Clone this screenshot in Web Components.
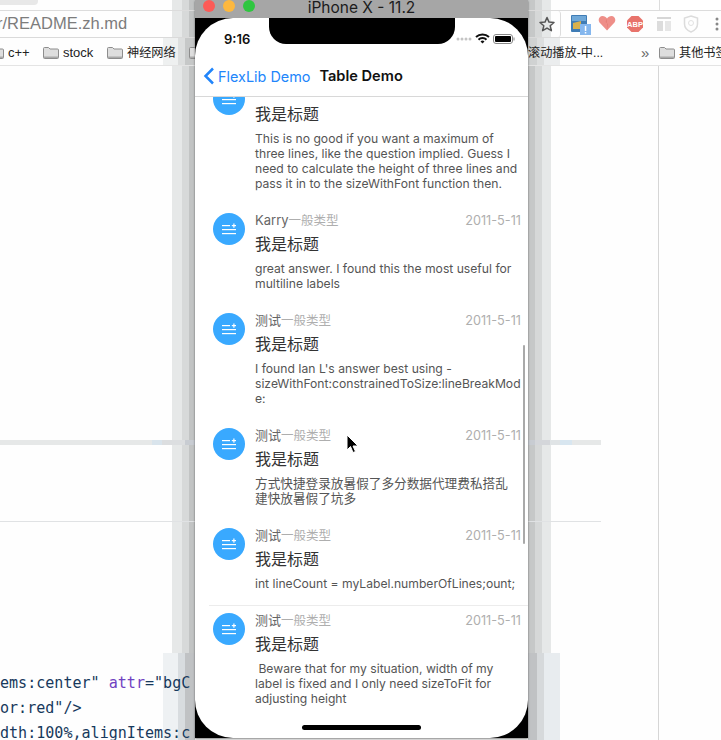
<!DOCTYPE html>
<html>
<head>
<meta charset="utf-8">
<title>Table Demo</title>
<style>
  html, body { margin: 0; background: #fff; }
  body { width: 721px; height: 740px; overflow: hidden; position: relative; font-family: "Inter", "Noto Sans CJK SC", sans-serif; }
</style>
</head>
<body>
<browser-page>
  <sim-window>
    <demo-item first>This is no good if you want a maximum of three lines, like the question implied. Guess I need to calculate the height of three lines and pass it in to the sizeWithFont function then.</demo-item>
    <demo-item name="Karry">great answer. I found this the most useful for multiline labels</demo-item>
    <demo-item name="测试">I found Ian L's answer best using -sizeWithFont:constrainedToSize:lineBreakMode:</demo-item>
    <demo-item name="测试"><span style="font-size:12.65px">方式快捷登录放暑假了多分数据代理费私搭乱<br>建快放暑假了坑多</span></demo-item>
    <demo-item name="测试" divider>int lineCount = myLabel.numberOfLines;ount;</demo-item>
    <demo-item name="测试">&nbsp;Beware that for my situation, width of my label is fixed and I only need sizeToFit for adjusting height</demo-item>
  </sim-window>
</browser-page>

<script>
const pageTemplate = document.createElement('template')
pageTemplate.innerHTML = `
<style>
  :host { display: block; width: 721px; height: 740px; position: relative; overflow: hidden; background: #fefefe; color: #222; font-family: "Liberation Sans", "Noto Sans CJK SC", sans-serif; }
  /* smeared frames of the simulator window, they lie under everything else */
  .ghost { position: absolute; }
  #ghost-l { left: 172px; top: 0; width: 23px; height: 740px; background: linear-gradient(90deg, #e6e8e8 0 10px, #d7d9d9 10px 17px, #c2c4c4 17px 23px); }
  #ghost-r { left: 528px; top: 0; width: 23px; height: 740px; background: linear-gradient(90deg, #c6c8c8 0 7px, #d6d8d8 7px 14px, #e6e8e8 14px 23px); }
  #ghost-l2 { left: 163px; top: 653px; width: 32px; height: 87px; background: linear-gradient(90deg, #eef1f3 0 15px, #d8dcdf 15px 22px, #c0c2c4 22px); }
  #ghost-r2 { left: 528px; top: 653px; width: 32px; height: 87px; background: linear-gradient(90deg, #c0c2c4 0 9px, #d6d9db 9px 16px, #e8ecef 16px 32px); }
  #ghost-l3 { left: 163px; top: 38px; width: 32px; height: 27px; background: linear-gradient(90deg, #eef0f0 0 15px, #dcdede 15px 22px, #c6c8c8 22px); }
  #ghost-r3 { left: 528px; top: 38px; width: 32px; height: 27px; background: linear-gradient(90deg, #d0d2d2 0 9px, #dcdede 9px 16px, #ebedee 16px 32px); }
  #chrome { position: relative; }
  #tabs { height: 10px; border-bottom: 1px solid #dcdcdc; display: flex; justify-content: space-between; align-items: flex-start; }
  #tab-l { width: 38px; height: 5px; background: #e8e8e8; border-radius: 0 0 4px 0; }
  #tab-r { width: 61px; height: 10px; background: #fff; border-left: 1px solid #dcdcdc; }
  #toolbar { height: 26px; display: flex; align-items: center; border-bottom: 1px solid #dadada; }
  #field { width: 561px; height: 26px; flex: none; box-sizing: border-box; display: flex; align-items: center; justify-content: space-between; border-right: 1px solid #dcdcdc; border-radius: 0 3px 3px 0; padding-right: 4px; }
  #url { font-size: 16.5px; line-height: 22px; color: #7c7c7c; margin: -3px 0 0 -3px; white-space: nowrap; }
  .tool { flex: none; }
  #bookmarks { height: 27px; border-bottom: 1px solid #e4e4e4; font-size: 12.2px; white-space: nowrap; position: relative; overflow: hidden; }
  .mark { position: absolute; top: 5px; display: flex; align-items: center; gap: 4px; height: 18px; color: #222; }
  .folder { width: 16px; height: 13px; flex: none; }
  #content { position: relative; height: 674px; }
  #rule-v { position: absolute; left: 658px; top: 0; bottom: 0; width: 1px; background: #d6d6d6; }
  #band { position: absolute; left: 0; top: 374px; width: 601px; height: 5px; background: linear-gradient(90deg, #e6e8e8 0 152px, #d9e4ec 152px 162px, #dcdee0 162px 185px, #c8ccd2 185px 195px, #c8ccd2 195px 535px, #d4d6da 535px 550px, #e0e4e6 550px 560px, #d8e6f0 560px 572px, #e6e8e8 572px); }
  #rule-h { position: absolute; left: 0; top: 455px; width: 601px; height: 1px; background: #e0e2e4; }
  #code { position: absolute; left: 0; top: 605px; font: 15.05px/25px "DejaVu Sans Mono", monospace; color: #17395c; white-space: pre; }
  #code b { font-weight: normal; color: #6f42c1; }
</style>
<div id="ghost-l" class="ghost"></div>
<div id="ghost-r" class="ghost"></div>
<div id="ghost-l2" class="ghost"></div>
<div id="ghost-r2" class="ghost"></div>
<div id="ghost-l3" class="ghost"></div>
<div id="ghost-r3" class="ghost"></div>
<div id="chrome">
  <div id="tabs"><div id="tab-l"></div><div id="tab-r"></div></div>
  <div id="toolbar">
    <div id="field">
      <div id="url">r/README.zh.md</div>
      <svg class="tool" width="18" height="18" viewBox="0 0 18 18"><path d="M9 2.5l2 4.6 5 .4-3.8 3.3 1.2 4.9L9 13.1l-4.4 2.6 1.2-4.9L2 7.5l5-.4z" fill="none" stroke="#555" stroke-width="1.5" stroke-linejoin="round"/></svg>
    </div>
    <svg class="tool" style="margin:2px 0 0 9px" width="22" height="22" viewBox="0 0 22 22"><rect x="1" y="1" width="16" height="17" rx="1" fill="#3f7cb5"/><rect x="2" y="2" width="14" height="5" fill="#6fa8d8"/><path d="M3 9l8-2v8H3z" fill="#d9b14c"/><rect x="10" y="10" width="11" height="11" fill="#85b7ee"/><rect x="14.8" y="12" width="1.5" height="5" fill="#fff"/><rect x="14.8" y="18" width="1.5" height="1.5" fill="#fff"/></svg>
    <svg class="tool" style="margin:-2px 0 0 6px" width="18" height="16" viewBox="0 0 18 16"><path d="M9 15.5L1.5 7.5C-.5 4.5 1.5 1 4.5 1 6.5 1 8 2 9 3.5 10 2 11.5 1 13.5 1c3 0 5 3.5 3 6.5z" fill="#ee8e88"/><path d="M9 3.5L7.5 7 10 9 9 15.5z" fill="#e67f79"/></svg>
    <svg class="tool" style="margin-left:10px" width="18" height="18" viewBox="0 0 18 18"><path d="M5.5 1h7L17 5.5v7L12.5 17h-7L1 12.5v-7z" fill="#e8736b"/><text x="9" y="11.8" font-family="Liberation Sans" font-size="7.5" font-weight="700" text-anchor="middle" fill="#fff">ABP</text></svg>
    <svg class="tool" style="margin-left:12px" width="16" height="16" viewBox="0 0 16 16"><rect x="1" y="1" width="14" height="2" fill="#d6d6d6"/><rect x="1" y="5" width="6" height="10" fill="#dcdcdc"/><rect x="9" y="5" width="6" height="10" fill="#e6e6e6"/></svg>
    <svg class="tool" style="margin-left:11px" width="16" height="18" viewBox="0 0 16 18"><path d="M8 1l6.5 2v6c0 4-3 6.5-6.5 8C4.5 15.5 1.5 13 1.5 9V3z" fill="none" stroke="#dcdcdc" stroke-width="1.5"/><circle cx="8" cy="8" r="2.5" fill="none" stroke="#e2e2e2"/></svg>
    <svg class="tool" style="margin-left:16px" width="4" height="16" viewBox="0 0 4 16"><circle cx="2" cy="3" r="1.5" fill="#888"/><circle cx="2" cy="8" r="1.5" fill="#888"/><circle cx="2" cy="13" r="1.5" fill="#888"/></svg>
  </div>
  <div id="bookmarks"></div>
  <div id="content">
    <div id="rule-v"></div>
    <div id="band"></div>
    <div id="rule-h"></div>
    <div id="code">ems:center" <b>attr</b>="bgC
or:red"/>
dth:100%,alignItems:c</div>
  </div>
</div>
<slot></slot>
`

const folderSvg = '<svg class="folder" viewBox="0 0 16 13"><path d="M.5 2.5a1 1 0 0 1 1-1h4L7 3h7.5a1 1 0 0 1 1 1v7.5a1 1 0 0 1-1 1h-13a1 1 0 0 1-1-1z" fill="#dedede" stroke="#8d8d8d"/><rect x="1" y="10.5" width="14" height="1.5" fill="#aaa"/></svg>'

// bookmark labels, with their left edge on the page
const marks = [
  { x: -12, text: 'c++', size: 13 },
  { x: 43, text: 'stock', size: 13 },
  { x: 107, text: '神经网络' },
  { x: 189, text: '' },
  { x: 528, text: '滚动播放-中...', noIcon: true },
  { x: 659, text: '其他书签' }
]

class BrowserPage extends HTMLElement {
  constructor () {
    super()
    this.attachShadow({ mode: 'open' })
    this.shadowRoot.appendChild(pageTemplate.content.cloneNode(true))
  }

  connectedCallback () {
    const bar = this.shadowRoot.querySelector('#bookmarks')
    marks.forEach(mark => {
      const el = document.createElement('div')
      el.className = 'mark'
      el.style.left = `${mark.x}px`
      if (mark.size) el.style.fontSize = `${mark.size}px`
      el.innerHTML = `${mark.noIcon ? '' : folderSvg}<span>${mark.text}</span>`
      bar.appendChild(el)
    })
    const more = document.createElement('div')
    more.className = 'mark'
    more.style.left = '641px'
    more.style.color = '#666'
    more.style.fontSize = '15px'
    more.textContent = '»'
    bar.appendChild(more)
  }
}

const simTemplate = document.createElement('template')
simTemplate.innerHTML = `
<style>
  :host { display: block; position: absolute; left: 195px; top: 0; width: 333px; height: 738px; background: #000; box-shadow: 0 1px 2px rgba(0,0,0,.5); font-family: "Inter", "Noto Sans CJK SC", sans-serif; }
  #title { height: 18px; box-sizing: border-box; padding-bottom: 4px; background: #a6a6a6; display: flex; align-items: center; position: relative; font-size: 15.5px; color: #1c1c1c; justify-content: center; white-space: nowrap; }
  .dot { position: absolute; top: 0; width: 12px; height: 12px; border-radius: 50%; }
  #screen { height: 720px; background: #fff; border-radius: 38px; overflow: hidden; position: relative; display: flex; flex-direction: column; }
  #notch { position: absolute; left: 74px; top: 0; width: 186px; height: 26px; background: #000; border-radius: 0 0 17px 17px; }
  #status { height: 38px; flex: none; display: flex; align-items: center; padding: 3px 13px 0 29px; box-sizing: border-box; justify-content: space-between; font-size: 13px; font-weight: 600; color: #111; position: relative; }
  #signal { display: flex; align-items: center; gap: 3px; }
  #nav { height: 41px; flex: none; display: flex; align-items: center; border-bottom: 1px solid #d8d8d8; box-sizing: border-box; padding-left: 8px; }
  #back { color: #2185fb; display: flex; align-items: center; gap: 3px; font-size: 14.4px; }
  #heading { font-weight: 600; color: #111; margin-left: 9px; font-size: 14.6px; }
  #list { flex: 1; overflow: hidden; position: relative; }
  #scroll { position: absolute; left: 328px; top: 248px; width: 2px; height: 199px; background: #a9a9a9; border-radius: 1px; }
  #pointer { position: absolute; left: 150px; top: 416px; }
  #home { position: absolute; left: 107px; bottom: 8px; width: 119px; height: 5px; border-radius: 3px; background: #000; }
</style>
<div id="title">
  <div class="dot" style="left:8px;background:#fc5b57"></div>
  <div class="dot" style="left:28px;background:#fdb83f"></div>
  <div class="dot" style="left:48px;background:#2fc640"></div>
  iPhone X - 11.2
</div>
<div id="screen">
  <div id="notch"></div>
  <div id="status">
    <span>9:16</span>
    <div id="signal">
      <svg width="16" height="4" viewBox="0 0 16 4"><g fill="#c4c4c4"><circle cx="2" cy="2" r="1.5"/><circle cx="6" cy="2" r="1.5"/><circle cx="10" cy="2" r="1.5"/><circle cx="14" cy="2" r="1.5"/></g></svg>
      <svg width="15" height="11" viewBox="0 0 15 11"><path d="M1 4a9.500 9.500 0 0 1 13 0M3.500 6.700a5.500 5.500 0 0 1 8 0" fill="none" stroke="#111" stroke-width="2"/><path d="M7.500 10.500l-2-2a3 3 0 0 1 4 0z" fill="#111"/></svg>
      <svg width="22" height="10" viewBox="0 0 22 10"><rect x=".5" y=".5" width="19" height="9" rx="2.5" fill="none" stroke="#888"/><rect x="2" y="2" width="16" height="6" rx="1" fill="#000"/><rect x="20.500" y="3.500" width="1" height="3" fill="#888"/></svg>
    </div>
  </div>
  <div id="nav">
    <div id="back">
      <svg width="12" height="18" viewBox="0 0 12 18"><path d="M10 1.500L2.500 9l7.500 7.500" fill="none" stroke="#2185fb" stroke-width="2.500"/></svg>
      <span>FlexLib Demo</span>
    </div>
    <div id="heading">Table Demo</div>
  </div>
  <div id="list"><slot></slot><div id="scroll"></div></div>
  <svg id="pointer" width="14" height="20" viewBox="0 0 14 20"><path d="M2 1v15l3.500-3.500 2.500 6 2.500-1-2.500-5.500h5z" fill="#000" stroke="#fff"/></svg>
  <div id="home"></div>
</div>
`

class SimWindow extends HTMLElement {
  constructor () {
    super()
    this.attachShadow({ mode: 'open' })
    this.shadowRoot.appendChild(simTemplate.content.cloneNode(true))
  }
}

const itemTemplate = document.createElement('template')
itemTemplate.innerHTML = `
<style>
  :host { display: flex; box-sizing: border-box; padding: 7px 7px 15px 18px; gap: 10px; font-family: "Inter", "Noto Sans CJK SC", sans-serif; }
  :host([first]) { margin-top: -21px; }
  :host([first]) #meta { visibility: hidden; }
  :host([divider]) { border-bottom: 1px solid #ececec; margin-left: 14px; padding-left: 4px; padding-bottom: 14px; }
  #icon { width: 32px; height: 32px; flex: none; border-radius: 50%; background: #39a9ff; display: flex; align-items: center; justify-content: center; }
  #main { flex: 1; min-width: 0; }
  #meta { display: flex; justify-content: space-between; font-size: 12.5px; line-height: 15px; color: #aeaeae; }
  #name { color: #666; font-size: 13px; }
  #date { font-size: 12.7px; }
  #title { font-size: 16px; line-height: 24px; color: #333; margin-top: 4px; }
  #body { font-size: 12.15px; line-height: 15px; color: #555; margin-top: 5px; word-break: break-word; }
</style>
<div id="icon"><svg width="16" height="14" viewBox="0 0 16 14"><g fill="#fff"><rect x="1" y="3" width="8" height="1.200"/><rect x="1" y="7" width="14" height="1.200"/><rect x="1" y="11" width="14" height="1.200"/><rect x="10.800" y="3" width="4.200" height="1.200"/><rect x="12.300" y="1.500" width="1.200" height="4.200"/></g></svg></div>
<div id="main">
  <div id="meta"><div><span id="name"></span><span id="kind">一般类型</span></div><div id="date">2011-5-11</div></div>
  <div id="title">我是标题</div>
  <div id="body"><slot></slot></div>
</div>
`

class DemoItem extends HTMLElement {
  constructor () {
    super()
    this.attachShadow({ mode: 'open' })
    this.shadowRoot.appendChild(itemTemplate.content.cloneNode(true))
  }

  connectedCallback () {
    this.shadowRoot.querySelector('#name').textContent = this.getAttribute('name') || ''
  }
}

customElements.define('browser-page', BrowserPage)
customElements.define('sim-window', SimWindow)
customElements.define('demo-item', DemoItem)
</script>
</body>
</html>
